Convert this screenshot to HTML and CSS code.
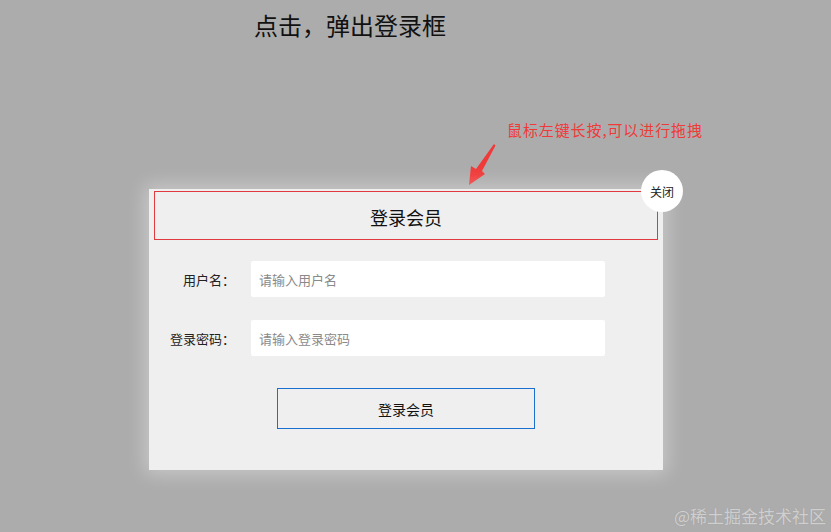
FILE: index.html
```html
<!DOCTYPE html>
<html>
<head>
  <title>点击，弹出登录框</title>
  <link rel="stylesheet" href="styles.css">
</head>
<body>
  <div class="page">
    <h1 class="trigger">点击，弹出登录框</h1>

    <!-- hint about dragging -->
    <div class="hint">鼠标左键长按,可以进行拖拽</div>
    <svg class="hint-arrow" width="40" height="50" viewBox="0 0 40 50">
      <polygon points="34,4 35.5,5.5 22,31 25,34 9,45 11,26 16,29" fill="#f03a3a"/>
    </svg>

    <div class="dialog">
      <div class="dialog-header">
        <span class="dialog-title">登录会员</span>
      </div>
      <div class="drag-area"></div>
      <button class="close-btn">关闭</button>

      <div class="form">
        <div class="form-row">
          <label for="username">用户名：</label>
          <input type="text" id="username" placeholder="请输入用户名">
        </div>
        <div class="form-row">
          <label for="password">登录密码：</label>
          <input type="password" id="password" placeholder="请输入登录密码">
        </div>
      </div>

      <div class="actions">
        <button class="submit-btn">登录会员</button>
      </div>
    </div>

    <div class="watermark">@稀土掘金技术社区</div>
  </div>
</body>
</html>
```

FILE: styles.css
```css
/* page */
body {
  margin: 0;
  background-color: #acacac;
  font-family: "Noto Sans CJK SC", "Microsoft YaHei", sans-serif;
  color: #222;
}

.page {
  position: relative;
  width: 831px;
  height: 532px;
  overflow: hidden;
}

.trigger {
  margin: 0;
  padding: 10px 0 0 254px;
  font-size: 24px;
  font-weight: normal;
  line-height: 30px;
  color: #111;
}

/* annotation text and arrow */
.hint {
  position: absolute;
  left: 507px;
  top: 119px;
  font-size: 15px;
  line-height: 22px;
  letter-spacing: 0.9px;
  color: #f03a3a;
}

.hint-arrow {
  position: absolute;
  left: 460px;
  top: 140px;
}

/* login dialog */
.dialog {
  position: absolute;
  left: 149px;
  top: 189px;
  width: 514px;
  height: 281px;
  background-color: #efefef;
  box-shadow: 0 0 18px 4px rgba(255, 255, 255, 0.35);
}

.dialog-header {
  height: 50px;
  display: flex;
  align-items: center;
  justify-content: center;
  padding-top: 6px;
  box-sizing: border-box;
}

.dialog-title {
  font-size: 18px;
  color: #111;
}

/* red frame marking the draggable header */
.drag-area {
  position: absolute;
  left: 5px;
  top: 2px;
  width: 502px;
  height: 47px;
  border: 1px solid #e0393e;
}

.close-btn {
  position: absolute;
  right: -20px;
  top: -19px;
  width: 42px;
  height: 42px;
  border: none;
  border-radius: 50%;
  background-color: #fff;
  font-family: inherit;
  font-size: 12px;
  color: #222;
  padding: 0;
  cursor: pointer;
}

/* form */
.form {
  display: flex;
  flex-direction: column;
  gap: 23px;
  padding-top: 22px;
}

.form-row {
  display: grid;
  grid-template-columns: 102px 354px;
  align-items: center;
}

.form-row label {
  text-align: right;
  padding-right: 16px;
  font-size: 13px;
  color: #222;
}

.form-row input {
  height: 36px;
  box-sizing: border-box;
  border: none;
  border-radius: 2px;
  background-color: #fff;
  padding: 0 8px;
  font-family: inherit;
  font-size: 13px;
  outline: none;
}

.form-row input::placeholder {
  color: #8a8a8a;
}

.actions {
  display: flex;
  justify-content: center;
  padding-top: 32px;
}

.submit-btn {
  width: 258px;
  height: 41px;
  border: 1px solid #1a6fd0;
  background-color: #efefef;
  font-family: inherit;
  font-size: 14px;
  color: #111;
  cursor: pointer;
}

/* site watermark */
.watermark {
  position: absolute;
  right: 5px;
  bottom: 4px;
  font-size: 17px;
  line-height: 24px;
  color: #cfcfcf;
  text-shadow: 0 0 1px #9a9a9a;
}
```
